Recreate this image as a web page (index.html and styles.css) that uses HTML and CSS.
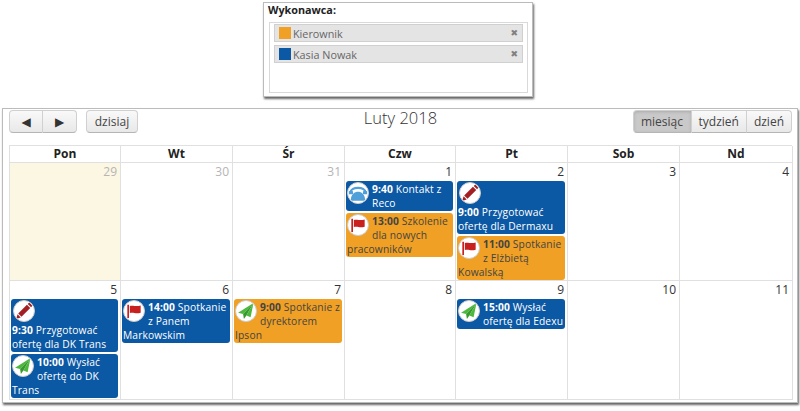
FILE: index.html
```html
<!DOCTYPE html>
<html lang="pl">
<head>
    <meta charset="UTF-8">
    <title>Kalendarz</title>
    <link rel="stylesheet" href="styles.css">
</head>
<body>
    <svg class="icon-defs" width="0" height="0">
        <symbol id="icon-phone" viewBox="0 0 24 24">
            <path fill="none" stroke="#4f9fd8" stroke-width="2.600" d="M3 11.500C3 4 21 4 21 11.500"/>
            <rect x="1" y="9.500" width="5" height="4" rx="1" fill="#4f9fd8"/>
            <rect x="18" y="9.500" width="5" height="4" rx="1" fill="#4f9fd8"/>
            <path fill="#4f9fd8" d="M3.500 20.500C3.500 13.500 8 10.500 12 10.500s8.500 3 8.500 10c0 .5-.3.800-.8.800H4.300c-.5 0-.8-.3-.8-.8z"/>
        </symbol>
        <symbol id="icon-flag" viewBox="0 0 24 24">
            <rect x="4" y="4.500" width="2" height="16" fill="#c8201f"/>
            <path fill="#c8201f" d="M7 6c4-1.400 6.500 1.200 13-.5v8.500c-6.500 1.700-9-1-13 .5z"/>
        </symbol>
        <symbol id="icon-pencil" viewBox="0 0 24 24">
            <path fill="#a31f24" d="M15.500 4.500l4 4L9 19l-4-4z"/>
            <path fill="#a31f24" d="M16.500 3.500l.8-.8c.6-.6 1.400-.6 2 0l2 2c.6.6.6 1.400 0 2l-.8.800z"/>
            <path fill="#a31f24" d="M4.300 16l3.700 3.700-5.500 1.800z"/>
        </symbol>
        <symbol id="icon-plane" viewBox="0 0 24 24">
            <path fill="#4cb83c" d="M21 2.500L2.500 14l6 1.500z"/>
            <path fill="#389a2e" d="M21 2.500L8.500 15.500l1 6 3-4z"/>
            <path fill="#4cb83c" d="M21 2.500L12.500 17.500l5 2z"/>
        </symbol>
    </svg>

    <section class="filter-panel">
        <div class="filter-label">Wykonawca:</div>
        <div class="filter-box">
            <div class="filter-item">
                <span class="swatch swatch-orange"></span>
                <span class="filter-name">Kierownik</span>
                <span class="filter-remove">✖</span>
            </div>
            <div class="filter-item">
                <span class="swatch swatch-blue"></span>
                <span class="filter-name">Kasia Nowak</span>
                <span class="filter-remove">✖</span>
            </div>
        </div>
    </section>

    <section class="cal-panel">
        <div class="cal-toolbar">
            <div class="toolbar-left">
                <div class="btn-group">
                    <button class="btn btn-arrow">◀</button>
                    <button class="btn btn-arrow">▶</button>
                </div>
                <button class="btn btn-single">dzisiaj</button>
            </div>
            <h2 class="cal-title">Luty 2018</h2>
            <div class="btn-group toolbar-right">
                <button class="btn btn-active">miesiąc</button>
                <button class="btn">tydzień</button>
                <button class="btn">dzień</button>
            </div>
        </div>

        <div class="cal-grid">
            <div class="day-head">Pon</div>
            <div class="day-head">Wt</div>
            <div class="day-head">Śr</div>
            <div class="day-head">Czw</div>
            <div class="day-head">Pt</div>
            <div class="day-head">Sob</div>
            <div class="day-head">Nd</div>

            <div class="day day-today"><div class="day-num day-other">29</div></div>
            <div class="day"><div class="day-num day-other">30</div></div>
            <div class="day"><div class="day-num day-other">31</div></div>
            <div class="day">
                <div class="day-num">1</div>
                <div class="event event-blue"><svg class="event-icon"><use href="#icon-phone"/></svg><b>9:40</b> Kontakt z Reco</div>
                <div class="event event-orange"><svg class="event-icon"><use href="#icon-flag"/></svg><b>13:00</b> Szkolenie dla nowych pracowników</div>
            </div>
            <div class="day">
                <div class="day-num">2</div>
                <div class="event event-blue"><svg class="event-icon event-icon-block"><use href="#icon-pencil"/></svg><b>9:00</b> Przygotować ofertę dla Dermaxu</div>
                <div class="event event-orange"><svg class="event-icon"><use href="#icon-flag"/></svg><b>11:00</b> Spotkanie z Elżbietą Kowalską</div>
            </div>
            <div class="day"><div class="day-num">3</div></div>
            <div class="day"><div class="day-num">4</div></div>

            <div class="day">
                <div class="day-num">5</div>
                <div class="event event-blue"><svg class="event-icon event-icon-block"><use href="#icon-pencil"/></svg><b>9:30</b> Przygotować ofertę dla DK Trans</div>
                <div class="event event-blue"><svg class="event-icon"><use href="#icon-plane"/></svg><b>10:00</b> Wysłać ofertę do DK Trans</div>
            </div>
            <div class="day">
                <div class="day-num">6</div>
                <div class="event event-blue"><svg class="event-icon"><use href="#icon-flag"/></svg><b>14:00</b> Spotkanie z Panem Markowskim</div>
            </div>
            <div class="day">
                <div class="day-num">7</div>
                <div class="event event-orange"><svg class="event-icon"><use href="#icon-plane"/></svg><b>9:00</b> Spotkanie z dyrektorem Ipson</div>
            </div>
            <div class="day"><div class="day-num">8</div></div>
            <div class="day">
                <div class="day-num">9</div>
                <div class="event event-blue"><svg class="event-icon"><use href="#icon-plane"/></svg><b>15:00</b> Wysłać ofertę dla Edexu</div>
            </div>
            <div class="day"><div class="day-num">10</div></div>
            <div class="day"><div class="day-num">11</div></div>
        </div>
    </section>
</body>
</html>
```

FILE: styles.css
```css
* {
    margin: 0;
    padding: 0;
    box-sizing: border-box;
}
html, body {
    height: 411px;
    overflow: hidden;
}
body {
    background: #fff;
    font-family: "Open Sans", "Noto Sans", sans-serif;
    font-size: 12px;
    color: #333;
    padding-top: 2px;
}
.icon-defs {
    display: block;
    height: 0;
}

/* wykonawca */
.filter-panel {
    width: 270px;
    height: 95px;
    margin-left: 263px;
    padding: 0 4px 3px 5px;
    border: 1px solid #bbb;
    background: #fff;
    box-shadow: 1px 2px 2px #666;
    display: flex;
    flex-direction: column;
}
.filter-label {
    font-size: 10.800px;
    font-weight: 700;
    line-height: 13px;
    color: #222;
    margin-left: -1px;
    height: 19px;
    flex: none;
}
.filter-box {
    flex: 1;
    border: 1px solid #d9d9d9;
    padding: 1px 4px;
    display: flex;
    flex-direction: column;
    gap: 3px;
}
.filter-item {
    height: 18px;
    background: #e4e4e4;
    border: 1px solid #d0d0d0;
    display: flex;
    align-items: center;
    padding: 0 4px;
    color: #666;
    font-size: 10.800px;
}
.swatch {
    width: 12px;
    height: 12px;
    margin-right: 2px;
    flex: none;
}
.swatch-orange {
    background: #f0a024;
}
.swatch-blue {
    background: #0b58a4;
}
.filter-name {
    flex: 1;
}
.filter-remove {
    color: #808080;
    font-size: 9px;
    font-family: "DejaVu Sans", sans-serif;
}

/* kalendarz */
.cal-panel {
    width: 796px;
    height: 295px;
    margin: 11px 0 0 2px;
    padding: 1px 5px 0 6px;
    border: 1px solid #bbb;
    background: #fff;
    box-shadow: 1px 2px 2px #666;
}
.cal-toolbar {
    display: grid;
    grid-template-columns: 1fr auto 1fr;
    align-items: start;
    height: 35px;
}
.toolbar-left {
    display: flex;
    gap: 9px;
}
.toolbar-right {
    justify-content: flex-end;
}
.cal-title {
    font-size: 16.500px;
    font-weight: 300;
    line-height: 15px;
    color: #333;
}
.btn-group {
    display: flex;
}
.btn {
    height: 23px;
    padding: 0 7px;
    border: 1px solid #d0d0d0;
    border-bottom-color: #b5b5b5;
    border-left-width: 0;
    background: linear-gradient(#f9f9f9, #e8e8e8);
    color: #444;
    font-family: inherit;
    font-size: 12px;
    cursor: pointer;
}
.btn-group .btn:first-child {
    border-left-width: 1px;
    border-radius: 4px 0 0 4px;
}
.btn-group .btn:last-child {
    border-radius: 0 4px 4px 0;
}
.btn-arrow {
    width: 34px;
    padding: 0;
    font-size: 12px;
    color: #333;
    font-family: "DejaVu Sans", sans-serif;
}
.btn-single {
    border-left-width: 1px;
    border-radius: 4px;
    width: 52px;
    padding: 0;
}
.btn-active {
    background: #c9c9c9;
    box-shadow: inset 0 1px 3px #aaa;
    width: 59px;
    padding: 0;
}
.cal-grid {
    display: grid;
    grid-template-columns: 111px 112px 112px 111px 112px 112px 113px;
    grid-template-rows: 17px 118px 119px;
    border-left: 1px solid #e0e0e0;
    border-top: 1px solid #e0e0e0;
}
.day-head {
    font-weight: 700;
    line-height: 16px;
    text-align: center;
    color: #222;
    border-right: 1px solid #e0e0e0;
    border-bottom: 1px solid #e0e0e0;
}
.day {
    border-right: 1px solid #e0e0e0;
    border-bottom: 1px solid #e0e0e0;
    padding: 0 2px 0 1px;
}
.day-today {
    background: #fcf7e3;
}
.day-num {
    text-align: right;
    font-size: 12px;
    line-height: 18px;
    padding-right: 1px;
    color: #333;
}
.day-other {
    color: #b5b5b5;
}
.event {
    margin-bottom: 2px;
    padding: 1px;
    border-radius: 3px;
    font-size: 10.250px;
    letter-spacing: .12px;
    line-height: 14px;
    display: flow-root;
}
.event-blue {
    background: #0b58a4;
    color: #fff;
}
.event-orange {
    background: #f0a024;
    color: #444;
}
.event-icon {
    float: left;
    width: 22px;
    height: 22px;
    margin-right: 3px;
    background: #fff;
    border: 1px solid #ccc;
    border-radius: 50%;
}
.event-icon-block {
    float: none;
    display: block;
    margin-bottom: 1px;
    margin-left: 1px;
}
```
